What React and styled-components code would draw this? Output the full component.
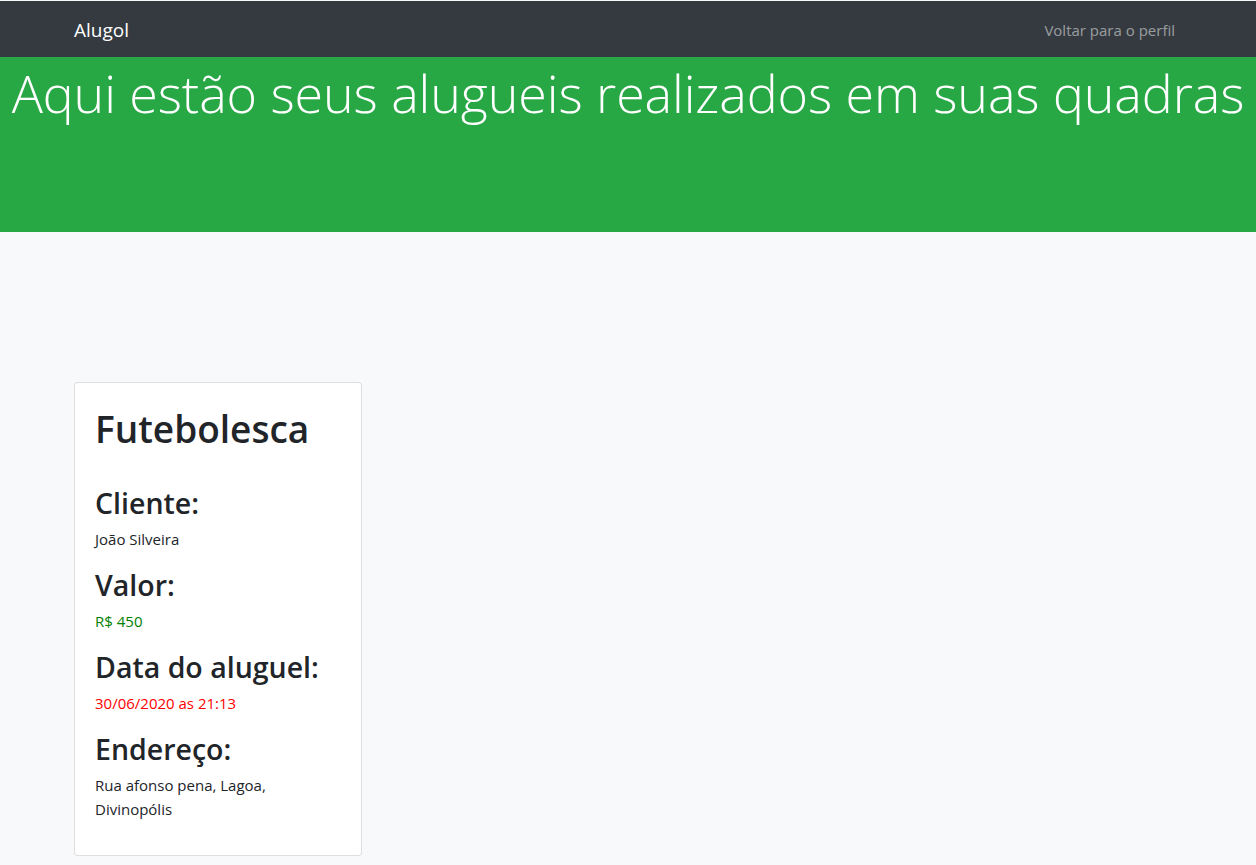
import React from 'react'
import styled, { createGlobalStyle } from 'styled-components'

const GlobalStyle = createGlobalStyle`
  * {
    box-sizing: border-box;
  }
  body {
    margin: 0;
    padding-top: 1px;
    background: #f8f9fa;
    color: #212529;
    font-family: "Open Sans", "Noto Sans", sans-serif;
    font-size: 16px;
    line-height: 1.5;
  }
`

const Navbar = styled.nav`
  background: #343a40;
  height: 56px;
  padding: 0 58px;
`
const NavInner = styled.div`
  display: flex;
  justify-content: space-between;
  align-items: center;
  height: 100%;
  padding: 2px 15px 0 16px;
`
const Brand = styled.a`
  color: #fff;
  font-size: 19px;
  text-decoration: none;
`
const NavLink = styled.a`
  color: rgba(255, 255, 255, 0.5);
  font-size: 15px;
  padding: 0 8px;
  text-decoration: none;
`

const Banner = styled.header`
  background: #28a745;
  height: 175px;
  padding-top: 2px;
`
const BannerTitle = styled.h1`
  margin: 0;
  color: #fff;
  font-size: 52px;
  font-weight: 300;
  letter-spacing: -0.1px;
  line-height: 67px;
  text-align: center;
  white-space: nowrap;
`

const Container = styled.main`
  padding: 150px 74px 8px;
`

const Card = styled.div`
  width: 288px;
  background: #fff;
  border: 1px solid rgba(0, 0, 0, 0.125);
  border-radius: 4px;
  padding: 22px 20px 17px;
`
const CardTitle = styled.h1`
  margin: 0 0 33px;
  font-size: 37px;
  font-weight: 600;
  line-height: 48px;
`
const Label = styled.h3`
  margin: 0 0 7px;
  font-size: 28.5px;
  font-weight: 600;
  line-height: 34px;
`
const Value = styled.p`
  margin: 0 0 17px;
  font-size: 15px;
  line-height: 24px;
  color: ${p => p.color || '#212529'};
`

const rental = {
  court: 'Futebolesca',
  client: 'João Silveira',
  price: 'R$ 450',
  date: '30/06/2020 as 21:13',
  address: 'Rua afonso pena, Lagoa, Divinopólis'
}

export default function App () {
  return (
    <>
      <GlobalStyle />
      <Navbar>
        <NavInner>
          <Brand href='#'>Alugol</Brand>
          <NavLink href='#'>Voltar para o perfil</NavLink>
        </NavInner>
      </Navbar>
      <Banner>
        <BannerTitle>Aqui estão seus alugueis realizados em suas quadras</BannerTitle>
      </Banner>
      <Container>
        <Card>
          <CardTitle>{rental.court}</CardTitle>
          <Label>Cliente:</Label>
          <Value>{rental.client}</Value>
          <Label>Valor:</Label>
          <Value color='green'>{rental.price}</Value>
          <Label>Data do aluguel:</Label>
          <Value color='red'>{rental.date}</Value>
          <Label>Endereço:</Label>
          <Value>{rental.address}</Value>
        </Card>
      </Container>
    </>
  )
}
